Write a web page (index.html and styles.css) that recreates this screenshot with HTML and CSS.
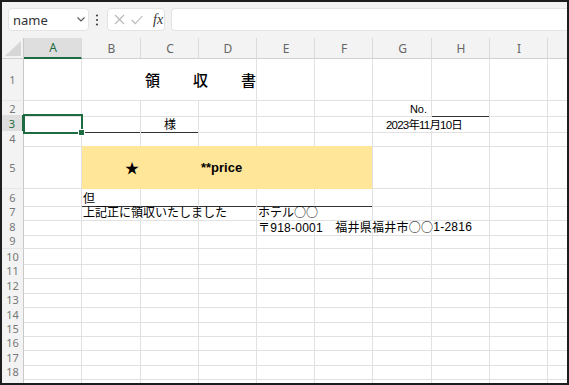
FILE: index.html
```html
<!DOCTYPE html>
<html lang="ja">
    <head>
        <meta charset="UTF-8">
        <meta name="viewport" content="width=device-width, initial-scale=1.0">
        <title>領収書</title>
        <link rel="stylesheet" href="styles.css">
    </head>
    <body>
        <div class="window">
            <div class="toolbar">
                <div class="namebox">
                    <span>name</span>
                    <svg class="chevron" width="8" height="5" viewBox="0 0 8 5"><path d="M0.5 0.5 L4 4 L7.5 0.5" fill="none" stroke="#555" stroke-width="1.1"/></svg>
                </div>
                <svg class="dots" width="4" height="12" viewBox="0 0 4 12"><circle cx="2" cy="1.5" r="1.1" fill="#444"/><circle cx="2" cy="6" r="1.1" fill="#444"/><circle cx="2" cy="10.5" r="1.1" fill="#444"/></svg>
                <div class="fxbox">
                    <svg width="11" height="11" viewBox="0 0 11 11"><path d="M1 1 L10 10 M10 1 L1 10" stroke="#b8b8b8" stroke-width="1.1"/></svg>
                    <svg width="12" height="10" viewBox="0 0 12 10"><path d="M0.7 5 L4.3 8.7 L11.3 1" fill="none" stroke="#b8b8b8" stroke-width="1.1"/></svg>
                    <span class="fx">fx</span>
                </div>
                <div class="formula"></div>
            </div>
            <div class="sheet">
                <div class="row colhead">
                    <div class="corner"><svg width="16" height="15" viewBox="0 0 16 15"><polygon points="16,0 16,15 0,15" fill="#d6d6d6"/></svg></div>
                    <div class="on">A</div><div>B</div><div>C</div><div>D</div><div>E</div><div>F</div><div>G</div><div>H</div><div>I</div><div></div>
                </div>
                <div class="row h42">
                    <div class="rh">1</div><div></div>
                    <div class="title span3"><span>領</span><span>収</span><span>書</span></div>
                    <div></div><div></div><div></div><div></div><div></div><div></div>
                </div>
                <div class="row h14">
                    <div class="rh">2</div><div></div><div></div><div></div><div></div><div></div><div></div>
                    <div class="no">No.</div><div class="ul"></div><div></div><div></div>
                </div>
                <div class="row h16">
                    <div class="rh on">3</div><div class="sel"></div><div class="ul"></div><div class="ul center">様</div>
                    <div></div><div></div><div></div>
                    <div class="date span2">2023年11月10日</div><div></div><div></div>
                </div>
                <div class="row h15">
                    <div class="rh">4</div><div></div><div></div><div></div><div></div><div></div><div></div><div></div><div></div><div></div><div></div>
                </div>
                <div class="row h43">
                    <div class="rh">5</div><div></div>
                    <div class="price span5"><span class="star">★</span><span class="amount">**price</span></div>
                    <div></div><div></div><div></div><div></div>
                </div>
                <div class="row h14">
                    <div class="rh">6</div><div></div><div class="ul">但</div><div class="ul"></div><div class="ul"></div><div class="ul"></div><div class="ul"></div>
                    <div></div><div></div><div></div><div></div>
                </div>
                <div class="row h15">
                    <div class="rh">7</div><div></div><div class="span3">上記正に領収いたしました</div><div class="span2">ホテル<span class="jp">○○</span></div>
                    <div></div><div></div><div></div><div></div>
                </div>
                <div class="row h14">
                    <div class="rh">8</div><div></div><div></div><div></div><div></div>
                    <div class="addr span4">〒918-0001　福井県福井市<span class="jp">○○</span>1-2816</div><div></div><div></div>
                </div>
                <div class="row h17"><div class="rh">9</div><div></div><div></div><div></div><div></div><div></div><div></div><div></div><div></div><div></div><div></div></div>
                <div class="row h14"><div class="rh">10</div><div></div><div></div><div></div><div></div><div></div><div></div><div></div><div></div><div></div><div></div></div>
                <div class="row h15"><div class="rh">11</div><div></div><div></div><div></div><div></div><div></div><div></div><div></div><div></div><div></div><div></div></div>
                <div class="row h14"><div class="rh">12</div><div></div><div></div><div></div><div></div><div></div><div></div><div></div><div></div><div></div><div></div></div>
                <div class="row h15"><div class="rh">13</div><div></div><div></div><div></div><div></div><div></div><div></div><div></div><div></div><div></div><div></div></div>
                <div class="row h14"><div class="rh">14</div><div></div><div></div><div></div><div></div><div></div><div></div><div></div><div></div><div></div><div></div></div>
                <div class="row h14"><div class="rh">15</div><div></div><div></div><div></div><div></div><div></div><div></div><div></div><div></div><div></div><div></div></div>
                <div class="row h15"><div class="rh">16</div><div></div><div></div><div></div><div></div><div></div><div></div><div></div><div></div><div></div><div></div></div>
                <div class="row h14"><div class="rh">17</div><div></div><div></div><div></div><div></div><div></div><div></div><div></div><div></div><div></div><div></div></div>
                <div class="row h15"><div class="rh">18</div><div></div><div></div><div></div><div></div><div></div><div></div><div></div><div></div><div></div><div></div></div>
                <div class="row h14"><div class="rh">19</div><div></div><div></div><div></div><div></div><div></div><div></div><div></div><div></div><div></div><div></div></div>
            </div>
        </div>
    </body>
</html>
```

FILE: styles.css
```css
body {
    margin: 0;
}
.window {
    width: 569px;
    height: 385px;
    box-sizing: border-box;
    border: 2px solid #1e1e1e;
    background: #f3f3f3;
    overflow: hidden;
}
.toolbar {
    height: 34px;
    box-sizing: border-box;
    padding: 6px 0 0 6px;
    display: flex;
    align-items: flex-start;
}
.namebox, .fxbox, .formula {
    height: 23px;
    box-sizing: border-box;
    background: #fff;
    border: 1px solid #e4e4e4;
    border-radius: 4px;
}
.namebox {
    width: 81px;
    display: flex;
    align-items: center;
    justify-content: space-between;
    padding: 0 3px 0 4px;
    font-family: "Noto Sans", sans-serif;
    font-size: 13px;
    color: #333;
}
.dots {
    margin: 6px 0 0 6px;
}
.fxbox {
    width: 58px;
    margin-left: 8px;
    display: flex;
    align-items: center;
    padding-left: 6px;
    gap: 6px;
}
.fx {
    margin-left: 4px;
    font-family: "Liberation Serif", serif;
    font-style: italic;
    font-size: 14px;
    color: #333;
}
.formula {
    flex: 1;
    margin-left: 6px;
    border-right: none;
    border-radius: 4px 0 0 4px;
}
.sheet {
    margin-top: 2px;
    background: #fff;
    height: 400px;
    overflow: hidden;
}
.row {
    display: grid;
    grid-template-columns: 22px 58px 59px 58px 58px 58px 58px 59px 58px 58px 58px;
    height: 14px;
}
.row > div {
    box-sizing: border-box;
    border-right: 1px solid #e1e1e1;
    border-bottom: 1px solid #e1e1e1;
    display: flex;
    align-items: center;
    white-space: nowrap;
    font-family: "Liberation Sans", "Noto Sans CJK JP", sans-serif;
    font-size: 12px;
    color: #000;
    padding-left: 1px;
}
.jp {
    font-family: "Noto Sans CJK JP", sans-serif;
}
.colhead {
    height: 21px;
    background: #f3f3f3;
}
.colhead > div {
    justify-content: center;
    font-family: "Noto Sans", sans-serif;
    font-size: 12px;
    color: #666;
    border-right-color: #dadada;
    border-bottom-color: #d0d0d0;
}
.colhead .on {
    background: #dedede;
    color: #1e6b41;
    border-bottom: 2px solid #1e6b41;
}
.colhead .corner {
    justify-content: flex-end;
    align-items: flex-end;
    padding: 0 2px 2px 0;
    border-right-color: #c8c8c8;
}
.row .rh {
    background: #f3f3f3;
    justify-content: center;
    padding-left: 0;
    font-family: "Noto Sans", sans-serif;
    font-size: 11px;
    color: #777;
    border-right-color: #c8c8c8;
    border-bottom-color: #e6e6e6;
}
.row .rh.on {
    background: #dedede;
    color: #1e6b41;
    border-right: 2px solid #1e6b41;
}
.h14 { height: 14px; }
.h15 { height: 15px; }
.h16 { height: 16px; }
.h17 { height: 17px; }
.h42 { height: 42px; }
.h43 { height: 43px; }
.span2 { grid-column: span 2; }
.span3 { grid-column: span 3; }
.span4 { grid-column: span 4; }
.span5 { grid-column: span 5; }
.row .ul {
    border-bottom-color: #333;
}
.row .center {
    justify-content: center;
}
.row .title {
    padding-left: 63px;
    gap: 33px;
    font-family: "Noto Sans CJK JP", sans-serif;
    font-size: 15px;
    font-weight: 500;
}
.row .no {
    justify-content: flex-end;
    padding-right: 4px;
    font-size: 11px;
}
.row .date {
    padding-left: 13px;
    font-size: 11.5px;
    letter-spacing: -0.8px;
}
.row .addr {
    letter-spacing: 0.25px;
}
.row .price {
    background: #ffe699;
    border-bottom-color: #ffe699;
    padding-left: 43px;
}
.star {
    font-family: "Noto Sans CJK JP", sans-serif;
    font-size: 14px;
}
.amount {
    margin-left: 62px;
    font-weight: bold;
    font-size: 13px;
}
.row .sel {
    position: relative;
    outline: 2px solid #1e6b41;
    outline-offset: -1px;
}
.sel::after {
    content: "";
    position: absolute;
    right: -4px;
    bottom: -4px;
    width: 5px;
    height: 5px;
    background: #1e6b41;
    border: 1px solid #fff;
    z-index: 2;
}
```
